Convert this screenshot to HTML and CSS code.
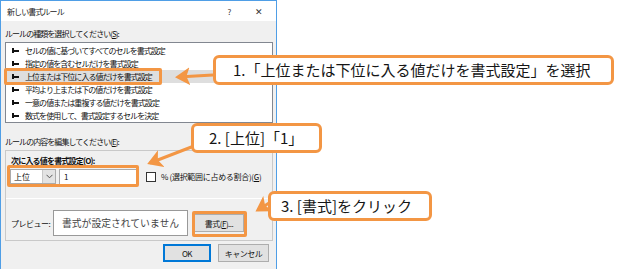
FILE: index.html
```html
<!DOCTYPE html>
<html lang="ja">
<head>
<meta charset="utf-8">
<link rel="stylesheet" href="styles.css">
</head>
<body>
<div class="page">
  <div class="dialog">
    <div class="titlebar">
      <span class="title">新しい書式ルール</span>
      <span class="tb-help">?</span>
      <span class="tb-close">✕</span>
    </div>
    <div class="content">
      <div class="label lbl1">ルールの種類を選択してください(<u>S</u>):</div>
      <div class="listbox">
        <div class="item"><span class="mark"></span>セルの値に基づいてすべてのセルを書式設定</div>
        <div class="item"><span class="mark"></span>指定の値を含むセルだけを書式設定</div>
        <div class="item sel"><span class="mark"></span>上位または下位に入る値だけを書式設定</div>
        <div class="item"><span class="mark"></span>平均より上または下の値だけを書式設定</div>
        <div class="item"><span class="mark"></span>一意の値または重複する値だけを書式設定</div>
        <div class="item"><span class="mark"></span>数式を使用して、書式設定するセルを決定</div>
      </div>
      <div class="label lbl2">ルールの内容を編集してください(<u>E</u>):</div>
      <div class="group">
        <div class="gtitle">次に入る値を書式設定(<u>O</u>):</div>
        <div class="row">
          <div class="combo"><span class="combo-val">上位</span><span class="combo-btn"><svg width="7" height="5" viewBox="0 0 7 5"><path d="M0.5 0.8 L3.5 3.8 L6.5 0.8" fill="none" stroke="#555" stroke-width="1"/></svg></span></div>
          <div class="textbox">1</div>
          <span class="check"></span>
          <span class="check-lbl">% (選択範囲に占める割合)(<u>G</u>)</span>
        </div>
        <div class="sep"></div>
        <div class="prow">
          <span class="plabel">プレビュー:</span>
          <div class="preview">書式が設定されていません</div>
          <div class="btn fmt">書式(<u>F</u>)...</div>
        </div>
      </div>
      <div class="buttons">
        <div class="btn ok">OK</div>
        <div class="btn cancel">キャンセル</div>
      </div>
    </div>
  </div>

  <div class="hl hl1"></div>
  <div class="hl hl2"></div>
  <div class="hl hl3"></div>

  <svg class="arrows" width="619" height="269" viewBox="0 0 619 269">
    <defs>
      <marker id="ah" markerWidth="6" markerHeight="6" refX="4" refY="3" orient="auto" markerUnits="strokeWidth">
        <path d="M0 0 L5 3 L0 6 L1.2 3 Z" fill="#f39644"/>
      </marker>
    </defs>
    <line x1="213" y1="75" x2="178" y2="77" stroke="#f39644" stroke-width="3" marker-end="url(#ah)"/>
    <line x1="194" y1="146" x2="150" y2="163" stroke="#f39644" stroke-width="3" marker-end="url(#ah)"/>
    <line x1="269" y1="203" x2="258" y2="210" stroke="#f39644" stroke-width="3" marker-end="url(#ah)"/>
  </svg>

  <div class="callout c1">1.「上位または下位に入る値だけを書式設定」を選択</div>
  <div class="callout c2">2. [上位]「1」</div>
  <div class="callout c3">3. [書式]をクリック</div>
</div>
</body>
</html>
```

FILE: styles.css
```css
* { box-sizing: border-box; }
html, body { margin: 0; padding: 0; background: #fff; }
body { font-family: "Noto Sans CJK JP", "Noto Sans", sans-serif; }
.page { position: relative; width: 619px; height: 269px; overflow: hidden; background: #fff; }

.dialog {
  width: 277px; height: 272px;
  border: 1px solid #4f9ee6;
  background: #f0f0f0;
  display: flex; flex-direction: column;
}
.titlebar {
  height: 20px; background: #fff;
  display: flex; align-items: center;
  padding-left: 6px;
  font-size: 8px; letter-spacing: -0.9px; color: #222;
}
.title { flex: 1; }
.tb-help { font-size: 8px; color: #333; width: 30px; text-align: center; }
.tb-close { font-size: 9px; color: #333; width: 30px; text-align: center; margin-right: 2px; }

.content { padding: 0 3px 0 4px; display: flex; flex-direction: column; }
.label { font-size: 8px; line-height: 12px; letter-spacing: -0.95px; color: #111; height: 12px; white-space: nowrap; }
.label u, .gtitle u, .check-lbl u, .btn u { text-decoration: underline; }
.lbl1 { margin-top: 7px; }
.lbl2 { margin-top: 13px; }

.listbox {
  margin-top: 2px; width: 268px; height: 81px;
  background: #fff; border: 1px solid #828790;
  padding-top: 1px;
}
.item {
  height: 13px; line-height: 13px; font-size: 8px; letter-spacing: -0.95px;
  color: #111; display: flex; align-items: center; padding-left: 6px; white-space: nowrap;
}
.item.sel { background: #dedede; }
.mark {
  width: 6px; height: 5px; margin-right: 7px; position: relative; flex: none;
  border-left: 2px solid #111;
}
.mark::after { content: ""; position: absolute; left: 0; top: 2px; width: 5px; height: 1.5px; background: #111; }

.group {
  margin-top: 2px; width: 268px; height: 91px;
  border: 1px solid #c9c9c9; background: #f0f0f0;
  padding: 4px 0 0 0;
  display: flex; flex-direction: column;
}
.gtitle { font-size: 8px; line-height: 12px; height: 12px; font-weight: bold; letter-spacing: -0.8px; padding-left: 5px; color: #111; white-space: nowrap; }
.row { display: flex; align-items: center; margin-top: 1px; padding-left: 4px; height: 17px; }
.combo {
  width: 46px; height: 15px; background: #fff; border: 1px solid #ababab;
  display: flex; align-items: center; justify-content: space-between;
  padding-left: 3px; font-size: 8px; color: #111;
}
.combo-btn {
  width: 13px; height: 13px; background: #e3e3e3; border-left: 1px solid #c8c8c8;
  display: flex; align-items: center; justify-content: center;
}
.textbox {
  margin-left: 3px; width: 78px; height: 16px; background: #fff; border: 1px solid #ababab;
  font-size: 8px; line-height: 14px; padding-left: 4px; color: #111;
}
.check { margin-left: 9px; width: 10px; height: 10px; border: 1px solid #333; background: #fff; flex: none; }
.check-lbl { margin-left: 5px; font-size: 8px; letter-spacing: -0.3px; color: #111; white-space: nowrap; }

.sep { margin-top: 13px; height: 1px; background: #dcdcdc; border-bottom: 1px solid #fff; }
.prow { display: flex; align-items: center; margin-top: 11px; padding-left: 5px; }
.plabel { font-size: 8px; letter-spacing: -0.5px; width: 42px; color: #111; white-space: nowrap; }
.preview {
  width: 135px; height: 26px; background: #fff; border: 1px solid #999;
  font-size: 9.8px; letter-spacing: 0; color: #444;
  display: flex; align-items: center; justify-content: center; white-space: nowrap;
}
.btn {
  height: 18px; background: #e1e1e1; border: 1px solid #adadad;
  font-size: 8px; letter-spacing: -0.5px; color: #111;
  display: flex; align-items: center; justify-content: center; white-space: nowrap;
}
.fmt { width: 50px; margin-left: 6px; }

.buttons { display: flex; justify-content: flex-end; gap: 7px; margin-top: 3px; padding-right: 4px; }
.ok { width: 48px; border: 2px solid #0078d7; }
.cancel { width: 51px; }

.hl { position: absolute; border: 3px solid #f39644; border-radius: 2px; }
.hl1 { left: 4px; top: 68px; width: 158px; height: 17px; }
.hl2 { left: 7px; top: 165px; width: 132px; height: 22px; }
.hl3 { left: 192px; top: 211px; width: 55px; height: 26px; }

.arrows { position: absolute; left: 0; top: 0; }

.callout {
  position: absolute; background: #fff;
  border: 3px solid #f39644; border-radius: 6px;
  font-size: 15px; line-height: 23px; color: #151515;
  padding-left: 15px; white-space: nowrap;
}
.c1 { left: 213px; top: 55px; width: 401px; height: 30px; padding-left: 17px; }
.c2 { left: 191px; top: 123px; width: 131px; height: 30px; }
.c3 { left: 268px; top: 191px; width: 164px; height: 30px; padding-left: 10px; }
```
